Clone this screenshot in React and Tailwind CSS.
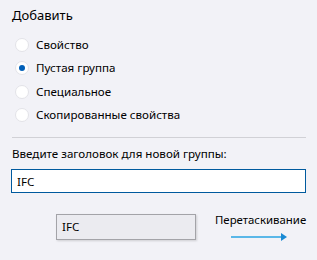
import React from 'react';

const options = ['Свойство', 'Пустая группа', 'Специальное', 'Скопированные свойства'];

const App = () => {
    const [selected, setSelected] = React.useState(1);
    const [title, setTitle] = React.useState('IFC');

    return (
        <div
            className="w-[317px] h-[260px] bg-[#f2f2f7] text-[#000] overflow-hidden px-[12px] pt-[6px]"
            style={{ fontFamily: '"Noto Sans", "Open Sans", sans-serif' }}
        >
            <h3 className="text-[13px] leading-[18px] mb-[9px]">Добавить</h3>

            <div className="flex flex-col">
                {options.map((label, i) => (
                    <label
                        key={label}
                        className="flex items-center h-[23.5px] cursor-default"
                        onClick={() => setSelected(i)}
                    >
                        <span className="ml-[3px] w-[14px] h-[14px] rounded-full bg-white border border-[#e3e3e8] flex items-center justify-center">
                            {selected === i && <span className="w-[6px] h-[6px] rounded-full bg-[#005fb8]" />}
                        </span>
                        <span className="ml-[7px] text-[11.6px] leading-[16px]">{label}</span>
                    </label>
                ))}
            </div>

            <div className="mt-[10px] mr-[-1px] h-px bg-[#d1d1d6]" />

            <p className="mt-[8px] text-[11.6px] leading-[16px]">Введите заголовок для новой группы:</p>

            <input
                value={title}
                onChange={e => setTitle(e.target.value)}
                className="mt-[7px] ml-[-1px] w-[295px] h-[24px] bg-white border border-[#005a9e] px-[5px] text-[11.6px] outline-none"
                style={{ fontFamily: '"Noto Sans", "Open Sans", sans-serif' }}
            />

            <div className="flex items-start mt-[21px]">
                <div className="ml-[44px] w-[140px] h-[26px] shrink-0 bg-[#ebebf0] border border-[#a3a3a8] shadow-[1px_1px_2px_rgba(0,0,0,0.15)] flex items-center px-[5px] text-[11.6px]">
                    {title}
                </div>
                <div className="ml-[19px] flex flex-col">
                    <span className="text-[11.4px] leading-[16px] -mt-[2px] whitespace-nowrap">Перетаскивание</span>
                    <svg width="58" height="8" viewBox="0 0 58 8" className="ml-[16px] mt-[5px]">
                        <line x1="0" y1="4" x2="51" y2="4" stroke="#5ab7e8" strokeWidth="2" />
                        <polygon points="50,0 56,4 50,8" fill="#1a8ad4" />
                    </svg>
                </div>
            </div>
        </div>
    );
};

export default App;
